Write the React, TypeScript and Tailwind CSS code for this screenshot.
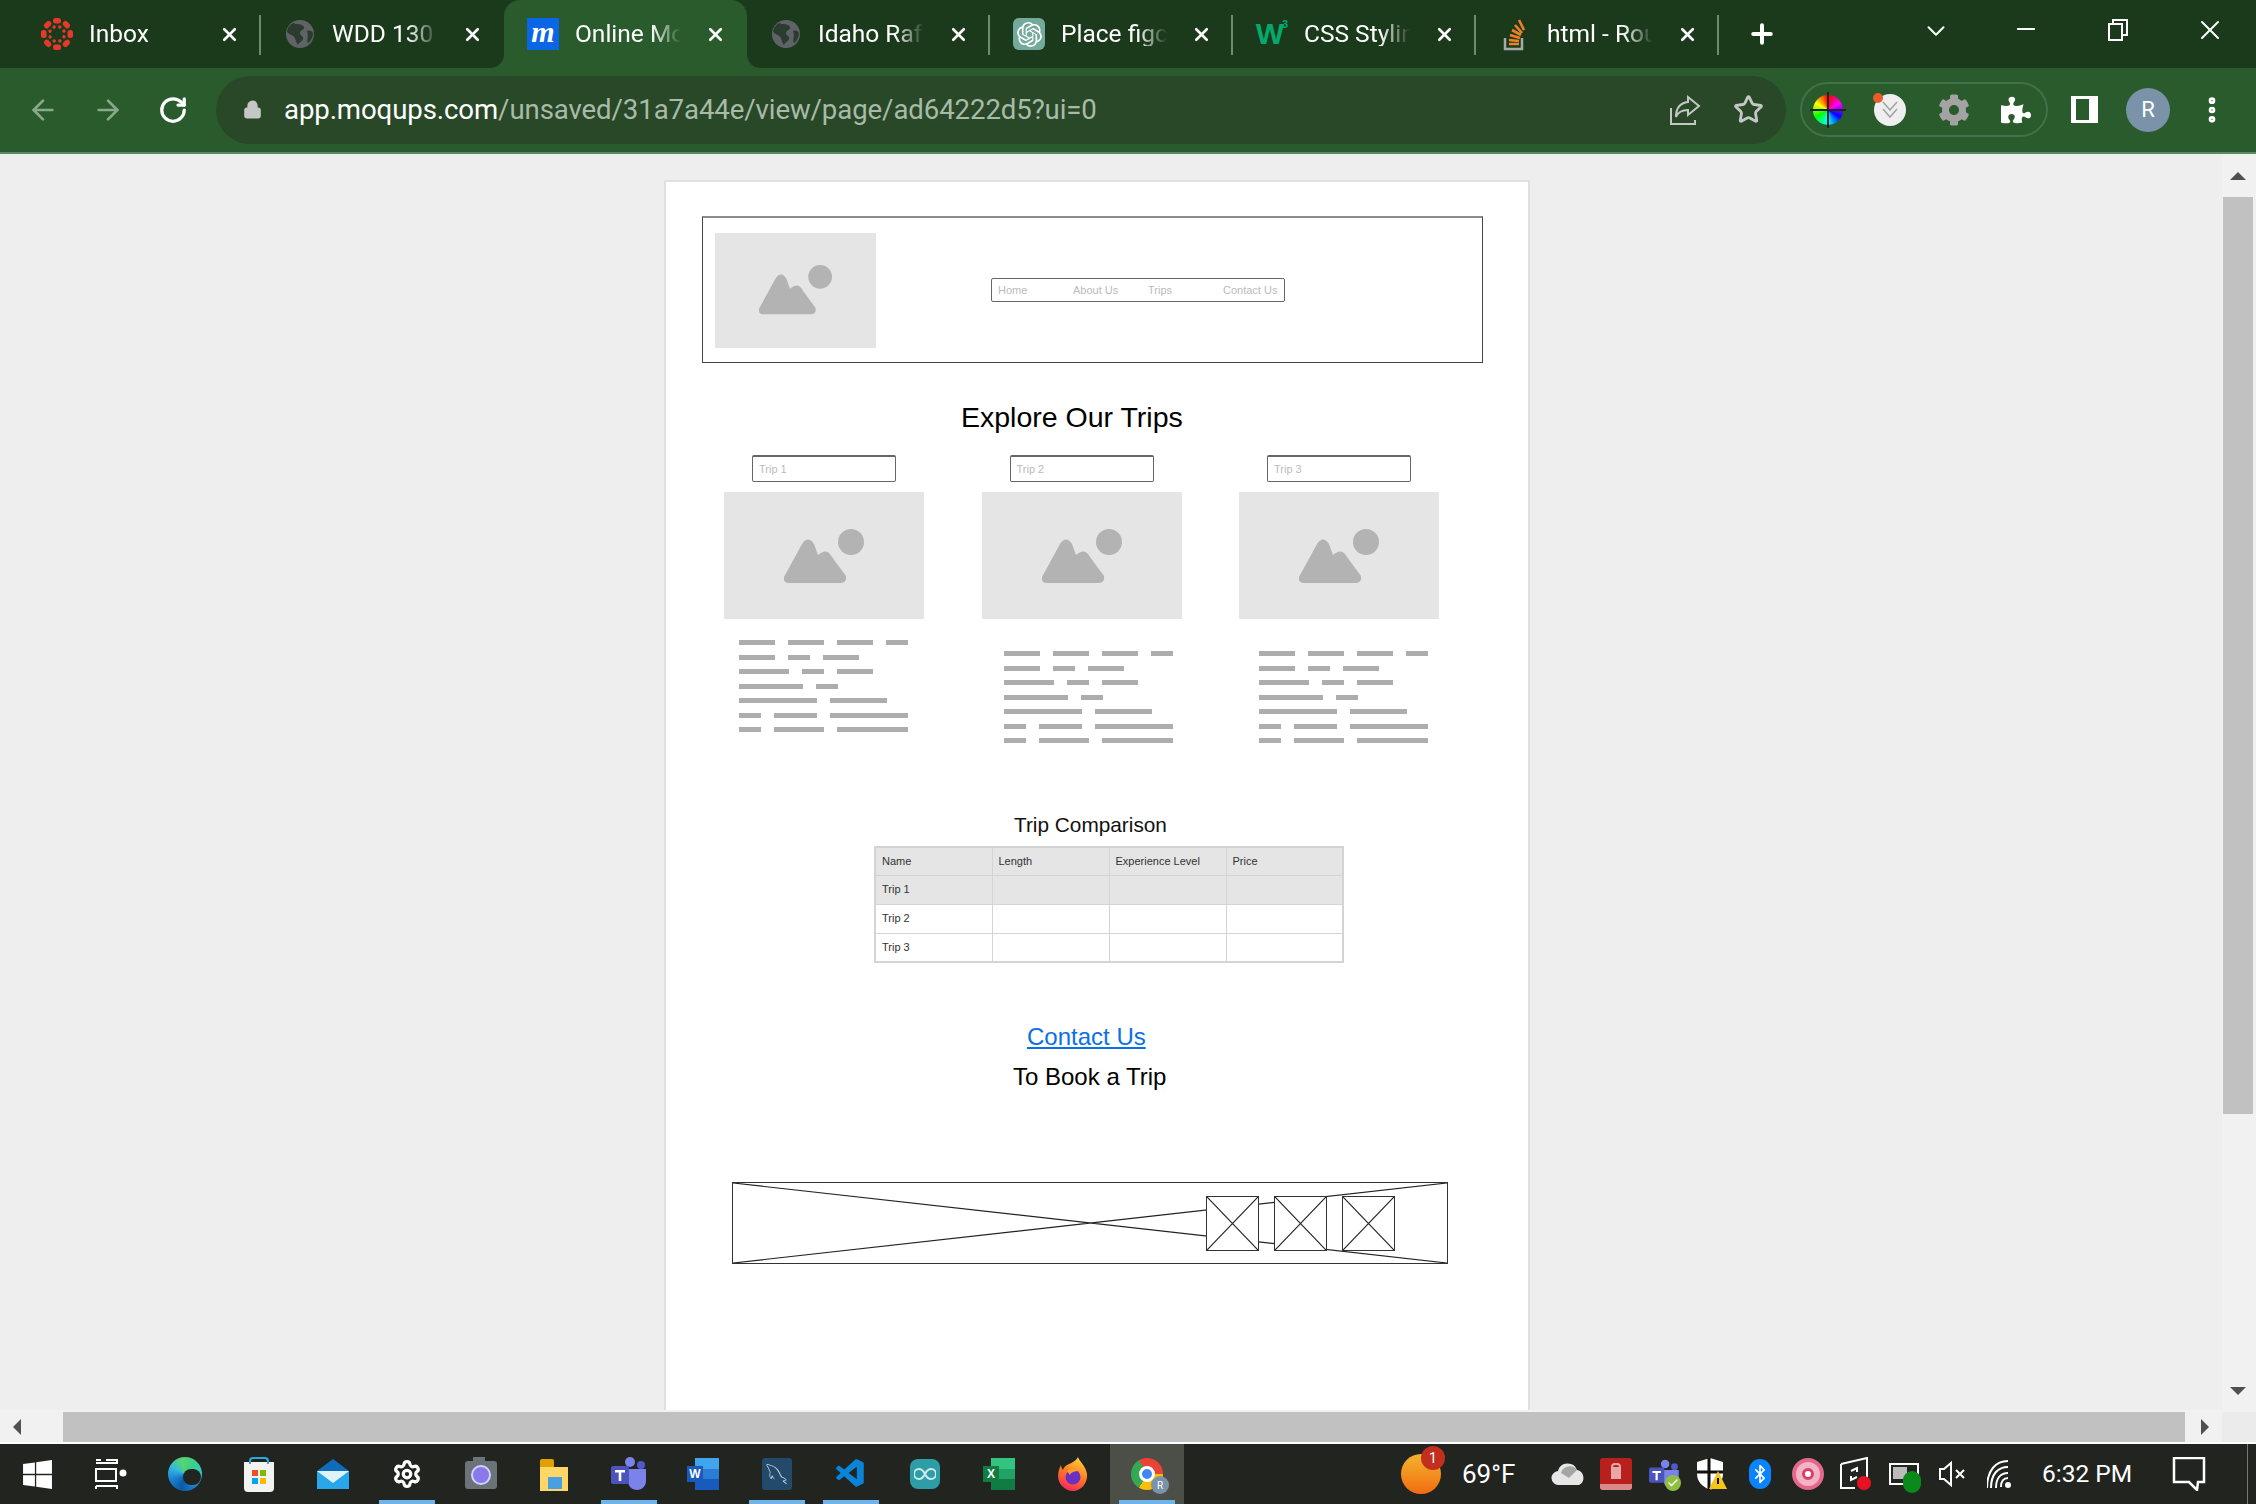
import { X, Plus, ChevronDown, Minus, ArrowLeft, ArrowRight, RotateCw, Lock, Star, MoreVertical, Settings, Bluetooth, Check } from "lucide-react"
import { SiOpenai } from "react-icons/si"
import { FaWindows, FaCog, FaPuzzlePiece } from "react-icons/fa"
import { DiMysql } from "react-icons/di"
import { VscVscode } from "react-icons/vsc"
import type { ReactNode } from "react"

const ui = "font-['Roboto',sans-serif]"
const wire = "font-['Liberation_Sans',Arial,sans-serif]"

function CanvasIcon() {
  const angles = [0, 45, 90, 135, 180, 225, 270, 315]
  return (
    <svg width="32" height="32" viewBox="-16 -16 32 32">
      {angles.map((a) => (
        <g key={a} transform={`rotate(${a})`}>
          <rect x="-4" y="-16" width="8" height="5.5" rx="2.5" fill="#e5392a" />
          <circle cx="0" cy="-7.5" r="1.7" fill="#e5392a" transform="rotate(22)" />
        </g>
      ))}
    </svg>
  )
}

function GlobeIcon() {
  return (
    <svg width="30" height="30" viewBox="0 0 30 30">
      <circle cx="15" cy="15" r="14" fill="#5f6368" />
      <path d="M8 4c4 2 9 0 11 4 1 3-4 3-4 6s4 3 3 6c-1 3-4 3-5 6-3-4-2-7-5-9s-5-2-6-5c1-4 3-6 6-8z" fill="#2b3b2e" />
      <path d="M22 12c3-1 5 0 6 2 0 4-2 8-5 10-2-3 1-6-1-12z" fill="#2b3b2e" />
    </svg>
  )
}

function MoqupsIcon() {
  return (
    <div className={`flex h-8 w-8 items-center justify-center bg-[#0a66e4] pb-[5px] font-['Liberation_Serif',serif] text-[30px] font-bold italic leading-none text-white`}>
      m
    </div>
  )
}

function OpenAiIcon() {
  return (
    <div className="flex h-8 w-8 items-center justify-center rounded-md bg-[#74aa9c] text-white">
      <SiOpenai size={25} />
    </div>
  )
}

function W3Icon() {
  return (
    <div className={`flex w-9 items-start ${wire} font-bold leading-none text-[#04aa6d]`}>
      <span className="text-[30px]">W</span>
      <span className="-ml-[2px] text-[11px]">3</span>
    </div>
  )
}

function StackIcon() {
  return (
    <svg width="24" height="34" viewBox="0 0 24 34" fill="none">
      <path d="M2 21v11h17V21" stroke="#a9a9a9" strokeWidth="2.5" />
      <path d="M6 27h10M6 23l10 1M7 18l10 3M9 13l9 5M12 8l7 8M16 3l5 10" stroke="#f08024" strokeWidth="2.6" />
    </svg>
  )
}

function Tab({ icon, title, active, sep }: { icon: ReactNode; title: string; active?: boolean; sep?: boolean }) {
  return (
    <div className={`relative flex h-[68px] w-[243px] shrink-0 items-center pl-[23px] ${active ? "rounded-t-[16px] bg-[#2a5b2c]" : ""}`}>
      {active && (
        <>
          <svg className="absolute bottom-0 -left-[14px]" width="14" height="14" viewBox="0 0 14 14"><path d="M14 0v14H0c8 0 14-6 14-14z" fill="#2a5b2c" /></svg>
          <svg className="absolute bottom-0 -right-[14px]" width="14" height="14" viewBox="0 0 14 14"><path d="M0 0v14h14C6 14 0 8 0 0z" fill="#2a5b2c" /></svg>
        </>
      )}
      <div className="flex w-8 shrink-0 justify-center">{icon}</div>
      <div className="ml-4 w-[106px] shrink-0 overflow-hidden whitespace-nowrap text-[24.5px] leading-none text-white [mask-image:linear-gradient(to_right,black_72%,transparent)]">
        {title}
      </div>
      <X className="ml-[24px] shrink-0 text-white" size={21} strokeWidth={3} />
      {sep && <div className="absolute right-0 top-[15px] h-[40px] w-[2px] bg-[#6d8a6e]" />}
    </div>
  )
}

function TabStrip() {
  return (
    <div className={`flex h-[68px] items-center bg-[#1b3a1c] pl-[18px] ${ui}`}>
      <Tab icon={<CanvasIcon />} title="Inbox" sep />
      <Tab icon={<GlobeIcon />} title="WDD 130" />
      <Tab icon={<MoqupsIcon />} title="Online Mockup" active />
      <Tab icon={<GlobeIcon />} title="Idaho Rafting" sep />
      <Tab icon={<OpenAiIcon />} title="Place figcaption" sep />
      <Tab icon={<W3Icon />} title="CSS Styling" sep />
      <Tab icon={<StackIcon />} title="html - Round" sep />
      <Plus className="ml-[28px] text-white" size={30} strokeWidth={3.2} />
      <ChevronDown className="ml-[144px] -mt-[6px] text-white" size={30} strokeWidth={1.6} />
      <Minus className="ml-[61px] -mt-[10px] text-white" size={28} strokeWidth={1.6} />
      <svg className="ml-[68px] -mt-[8px]" width="20" height="22" viewBox="0 0 20 22" fill="none" stroke="white" strokeWidth="2">
        <rect x="1" y="5" width="13" height="16" />
        <path d="M5 5V1h14v15h-5" />
      </svg>
      <X className="ml-[66px] -mt-[8px] text-white" size={32} strokeWidth={1.5} />
    </div>
  )
}

function ColorWheel() {
  return (
    <div className="relative h-[30px] w-[30px] rounded-full bg-[conic-gradient(#ff0000,#ff00ff,#0000ff,#00ffff,#00ff00,#ffff00,#ff0000)]">
      <div className="absolute left-[14px] -top-[3px] h-[36px] w-[2px] bg-[#222]" />
      <div className="absolute -left-[3px] top-[14px] h-[2px] w-[36px] bg-[#222]" />
    </div>
  )
}

function PocketIcon() {
  return (
    <div className="relative flex h-[32px] w-[32px] items-center justify-center rounded-full bg-[#efefef]">
      <svg width="18" height="20" viewBox="0 0 18 20" fill="none" stroke="#a5a5a5" strokeWidth="1.6">
        <path d="M2 2l7 8 7-8M2 9l7 8 7-8" />
      </svg>
      <div className="absolute -left-px -top-px h-[10px] w-[10px] rounded-full bg-[#ea5a2b]" />
    </div>
  )
}

function Toolbar() {
  return (
    <div className={`flex h-[86px] items-center border-b-2 border-[#5c8a5e] bg-[#2a5b2c] pb-[1px] pl-[10px] ${ui}`}>
      <div className="flex h-[65px] w-[65px] items-center justify-center text-[#8aa98b]"><ArrowLeft size={32} strokeWidth={2} /></div>
      <div className="flex h-[65px] w-[65px] items-center justify-center text-[#8aa98b]"><ArrowRight size={32} strokeWidth={2} /></div>
      <div className="flex h-[65px] w-[65px] items-center justify-center text-white"><RotateCw size={30} strokeWidth={2.6} /></div>
      <div className="ml-[11px] flex h-[68px] w-[1570px] items-center rounded-full bg-[#284828] pl-[27px]">
        <Lock size={19} strokeWidth={3} className="fill-[#c4c7c5] text-[#c4c7c5]" />
        <div className="ml-[22px] text-[27.6px] leading-none tracking-[-0.1px] text-[#a8bba9]">
          <span className="text-white">app.moqups.com</span>/unsaved/31a7a44e/view/page/ad64222d5?ui=0
        </div>
        <div className="ml-auto flex items-center pr-[22px]">
          <svg width="32" height="32" viewBox="0 0 32 32" fill="none" stroke="#c4c7c5" strokeWidth="2">
            <path d="M2 14v16h24v-4" />
            <path d="M19 3l11 9-11 9v-5c-6 0-10 2-12 7 0-9 4-14 12-15z" />
          </svg>
          <Star className="ml-[32px] text-[#c4c7c5]" size={31} strokeWidth={2.2} />
        </div>
      </div>
      <div className="ml-[14px] flex h-[55px] w-[248px] items-center rounded-full border-2 border-[#44704a] pl-[2px]">
        <div className="-ml-[4px] flex w-[60px] justify-center"><ColorWheel /></div>
        <div className="ml-[3px] flex w-[64px] justify-center"><PocketIcon /></div>
        <div className="ml-[4px] flex w-[64px] justify-center"><FaCog className="text-[#a3a3a3]" size={32} /></div>
        <div className="ml-[2px] flex w-[64px] justify-center"><FaPuzzlePiece className="text-white" size={30} /></div>
      </div>
      <div className="ml-[4px] flex w-[64px] justify-center">
        <div className="h-[27px] w-[27px] border-y-[3px] border-l-[5px] border-r-[9px] border-white" />
      </div>
      <div className="flex w-[64px] justify-center">
        <div className="flex h-[44px] w-[44px] items-center justify-center rounded-full bg-[#7a93a8] text-[22px] text-white">R</div>
      </div>
      <div className="flex w-[64px] justify-center"><MoreVertical className="text-white" size={32} strokeWidth={3} /></div>
    </div>
  )
}

function Mountain({ w }: { w: number }) {
  return (
    <svg width={w} viewBox="0 0 80 54" fill="#b3b3b3">
      <path d="M5 54Q-1 54 0 48L18 15Q24 6 30 15L34 26Q43 18 48 28L62 47Q63 54 57 54Z" />
      <circle cx="67" cy="13" r="13" />
    </svg>
  )
}

const bars = [
  [36, 36, 36, 22],
  [36, 22, 36],
  [50, 22, 36],
  [64, 22],
  [78, 57],
  [22, 43, 78],
  [22, 50, 71],
]

function TripCard({ label, textLeft, textTop }: { label: string; textLeft: string; textTop: string }) {
  return (
    <div className="w-[200px]">
      <div className="mx-auto flex h-[27px] w-[144px] items-center rounded-[2px] border border-[#666] border-t-2 pl-[6px] text-[11px] text-[#bbb]">{label}</div>
      <div className="mt-[10px] flex h-[127px] items-center justify-center bg-[#e5e5e5]">
        <Mountain w={80} />
      </div>
      <div className={`flex flex-col gap-[9.5px] ${textLeft} ${textTop}`}>
        {bars.map((row, i) => (
          <div key={i} className="flex h-[5px] gap-[13px]">
            {row.map((b, j) => (
              <div key={j} className="h-[5px] bg-[#adadad]" style={{ width: b }} />
            ))}
          </div>
        ))}
      </div>
    </div>
  )
}

function CrossBox({ className, children }: { className: string; children?: ReactNode }) {
  return (
    <div className={`relative border border-[#333] ${className}`}>
      <svg className="absolute inset-0 h-full w-full" preserveAspectRatio="none" viewBox="0 0 100 100">
        <path d="M0 0L100 100M100 0L0 100" stroke="#222" strokeWidth="1.2" vectorEffect="non-scaling-stroke" fill="none" />
      </svg>
      {children}
    </div>
  )
}

function WirePage() {
  const rows = ["Trip 1", "Trip 2", "Trip 3"]
  return (
    <div className={`ml-[664px] mt-[26px] flex w-[866px] shrink-0 flex-col border-x-2 border-t-2 border-[#e0e0e0] bg-white pl-[1px] pt-[34px] ${wire}`}>
      <div className="ml-[35px] flex h-[147px] w-[781px] items-center border border-[#444] border-t-2 border-t-[#8c8c8c]">
        <div className="ml-[12px] flex h-[115px] w-[161px] items-center justify-center bg-[#e5e5e5]">
          <Mountain w={73} />
        </div>
        <div className="ml-[115px] grid h-[24px] w-[294px] grid-cols-[75px_75px_75px_1fr] items-center rounded-[2px] border border-[#666] pl-[6px] text-[11px] text-[#bbb]">
          <span>Home</span>
          <span>About Us</span>
          <span>Trips</span>
          <span>Contact Us</span>
        </div>
      </div>

      <h1 className="mt-[37px] pl-[294px] text-[28.5px] leading-[34px] text-black">Explore Our Trips</h1>

      <div className="ml-[57px] mt-[21px] flex gap-[57.5px]">
        <TripCard label="Trip 1" textLeft="pl-[15px]" textTop="mt-[21px]" />
        <TripCard label="Trip 2" textLeft="pl-[22px]" textTop="mt-[32px]" />
        <TripCard label="Trip 3" textLeft="pl-[20px]" textTop="mt-[32px]" />
      </div>

      <div className="mt-[70px] pl-[347px] text-[20.8px] leading-[24px] text-[#111]">Trip Comparison</div>

      <table className="ml-[207px] mt-[9px] w-[470px] table-fixed border-collapse border-2 border-[#d4d4d4] text-[11px] text-[#333]">
        <tbody>
          <tr className="h-[28px] bg-[#e5e5e5]">
            {["Name", "Length", "Experience Level", "Price"].map((h) => (
              <td key={h} className="border border-[#d4d4d4] pl-[6px]">{h}</td>
            ))}
          </tr>
          {rows.map((r, i) => (
            <tr key={r} className={`h-[29px] ${i === 0 ? "bg-[#e5e5e5]" : "bg-white"}`}>
              <td className="border border-[#d4d4d4] pl-[6px]">{r}</td>
              <td className="border border-[#d4d4d4]" />
              <td className="border border-[#d4d4d4]" />
              <td className="border border-[#d4d4d4]" />
            </tr>
          ))}
        </tbody>
      </table>

      <a className="ml-[360px] mt-[60px] w-fit text-[24px] leading-[28px] text-[#0a6fe8] underline">Contact Us</a>
      <div className="ml-[346px] mt-[12px] text-[24px] leading-[28px] text-black">To Book a Trip</div>

      <CrossBox className="ml-[65px] mt-[91px] flex h-[82px] w-[716px] shrink-0 items-center justify-end gap-[15px] pr-[52px]">
        <CrossBox className="z-10 h-[55px] w-[53px] bg-white" />
        <CrossBox className="z-10 h-[55px] w-[53px] bg-white" />
        <CrossBox className="z-10 h-[55px] w-[53px] bg-white" />
      </CrossBox>
    </div>
  )
}

function VScroll() {
  return (
    <div className="ml-auto flex w-[34px] shrink-0 flex-col items-center bg-[#f1f1f1] pr-[2px]">
      <div className="flex h-[43px] items-center justify-center">
        <div className="mt-[1px] border-x-[8px] border-b-[8px] border-x-transparent border-b-[#505050]" />
      </div>
      <div className="h-[917px] w-[30px] bg-[#c1c1c1]" />
      <div className="mt-auto flex h-[36px] items-center justify-center pb-[2px]">
        <div className="border-x-[8px] border-t-[8px] border-x-transparent border-t-[#505050]" />
      </div>
    </div>
  )
}

function HScroll() {
  return (
    <div className="flex h-[34px] border-b-2 border-white bg-[#f1f1f1] pt-[2px]">
      <div className="flex w-[63px] items-center pl-[13px]">
        <div className="border-y-[8px] border-r-[8px] border-y-transparent border-r-[#505050]" />
      </div>
      <div className="w-[2122px] bg-[#c1c1c1]" />
      <div className="flex w-[37px] items-center pl-[16px]">
        <div className="border-y-[8px] border-l-[8px] border-y-transparent border-l-[#505050]" />
      </div>
      <div className="flex-1 bg-[#ebebeb]" />
    </div>
  )
}

function Edge() {
  return (
    <div className="h-[34px] w-[34px] rounded-full bg-[conic-gradient(from_40deg,#39d08c,#37c6d0,#1a7fd0,#0c59a4,#1a7fd0,#35b8e0,#58d66a,#39d08c)] p-[9px]">
      <div className="ml-[6px] mt-[3px] h-[16px] w-[18px] rounded-full bg-[#22251f]" />
    </div>
  )
}

function Store() {
  return (
    <div className="relative mt-[6px] h-[30px] w-[30px] rounded-b-[4px] bg-[#f2f2f2]">
      <div className="absolute -top-[5px] left-[5px] h-[7px] w-[20px] rounded-t-[4px] border-2 border-b-0 border-[#29a8e0]" />
      <div className="absolute left-[8px] top-[8px] grid grid-cols-2 gap-[2px]">
        <div className="h-[6px] w-[6px] bg-[#f25022]" />
        <div className="h-[6px] w-[6px] bg-[#7fba00]" />
        <div className="h-[6px] w-[6px] bg-[#00a4ef]" />
        <div className="h-[6px] w-[6px] bg-[#ffb900]" />
      </div>
    </div>
  )
}

function Mail() {
  return (
    <svg width="32" height="30" viewBox="0 0 32 30">
      <path d="M0 12L16 0l16 12v18H0z" fill="#0f6cbd" />
      <path d="M0 12h32v18H0z" fill="#28a8ea" />
      <path d="M0 12h32L16 24z" fill="#dff3fb" />
    </svg>
  )
}

function Camera() {
  return (
    <div className="relative mt-[2px] flex h-[28px] w-[32px] items-center justify-center rounded-[3px] bg-[#6c7378]">
      <div className="absolute -top-[4px] left-[8px] h-[5px] w-[12px] bg-[#6c7378]" />
      <div className="h-[20px] w-[20px] rounded-full border-2 border-[#cfd4ff] bg-[#8a79e8]" />
    </div>
  )
}

function Folder() {
  return (
    <div className="relative h-[30px] w-[30px]">
      <div className="h-[8px] w-[14px] rounded-t-[2px] bg-[#e0a100]" />
      <div className="h-[24px] w-[28px] bg-[#ffd766]" />
      <div className="absolute bottom-0 left-[8px] h-[12px] w-[14px] bg-[#4a9fe0]" />
    </div>
  )
}

function Teams({ small }: { small?: boolean }) {
  const s = small ? 0.85 : 1
  return (
    <svg width={36 * s} height={36 * s} viewBox="0 0 36 36">
      <circle cx="19" cy="6" r="5" fill="#7b83eb" />
      <circle cx="30" cy="9" r="4" fill="#5059c9" />
      <path d="M13 13h22v12c0 5-4 9-9 9s-9-4-9-9z" fill="#7b83eb" />
      <rect x="0" y="10" width="18" height="18" rx="2" fill="#4b53bc" />
      <path d="M4 14h10v2.500h-3.700V25H7.700v-8.500H4z" fill="#fff" />
    </svg>
  )
}

function OfficeIcon({ letter, dark, mid, light }: { letter: string; dark: string; mid: string; light: string }) {
  return (
    <div className="relative h-[32px] w-[32px]">
      <div className="ml-[8px] flex h-[32px] w-[24px] flex-col">
        <div className="flex-1" style={{ background: light }} />
        <div className="flex-1" style={{ background: mid }} />
        <div className="flex-1" style={{ background: dark }} />
      </div>
      <div className={`absolute left-0 top-[8px] flex h-[16px] w-[16px] items-center justify-center text-[12px] font-bold text-white ${wire}`} style={{ background: dark }}>
        {letter}
      </div>
    </div>
  )
}

function Firefox() {
  return (
    <svg width="30" height="34" viewBox="0 0 30 34">
      <defs>
        <linearGradient id="ffx" x1="0.7" y1="0" x2="0.3" y2="1">
          <stop offset="0" stopColor="#ffd23a" />
          <stop offset="0.5" stopColor="#ff7a1f" />
          <stop offset="1" stopColor="#f3265e" />
        </linearGradient>
      </defs>
      <path d="M20 0c1 4 8 9 9 17 1 9-6 17-14 17S0 27 0 19c0-5 2-9 3-11 0 2 1 4 2 5 1-5 7-6 10-8 2-1 4-3 5-5z" fill="url(#ffx)" />
      <circle cx="15" cy="20" r="7.500" fill="#6b2fc4" />
      <path d="M9 14c3-3 9-3 12 0-4 0-8 1-9 4z" fill="#ff9a2e" />
    </svg>
  )
}

function Chrome() {
  return (
    <div className="relative">
      <div className="flex h-[32px] w-[32px] items-center justify-center rounded-full bg-[conic-gradient(from_-30deg,#ea4335_0_120deg,#fbbc04_120deg_240deg,#34a853_240deg_360deg)]">
        <div className="h-[16px] w-[16px] rounded-full border-[3px] border-white bg-[#4285f4]" />
      </div>
      <div className={`absolute -bottom-[4px] -right-[6px] flex h-[18px] w-[18px] items-center justify-center rounded-full bg-[#7a93a8] text-[10px] text-white ${ui}`}>R</div>
    </div>
  )
}

const startCell = "flex h-[60px] w-[74px] shrink-0 items-center justify-center"
const bar = "absolute bottom-0 left-[9px] h-[4px] w-[56px] bg-[#6fb3e8]"

function Taskbar() {
  const tray = "flex h-[60px] w-[48px] shrink-0 items-center justify-center"
  return (
    <div className={`relative flex h-[60px] items-center bg-[#22251f] ${ui}`}>
      <div className={startCell}><FaWindows className="text-white" size={33} /></div>
      <div className={startCell}>
        <svg width="32" height="30" viewBox="0 0 32 30" fill="none" stroke="white" strokeWidth="2">
          <path d="M1 1h5M11 1h11v3H1M1 10h20v12H1zM1 27h22M22 27v3M1 27v3" />
          <circle cx="28" cy="14" r="2.500" fill="white" />
        </svg>
      </div>
      <div className={startCell}><Edge /></div>
      <div className={startCell}><Store /></div>
      <div className={startCell}><Mail /></div>
      <div className={`relative ${startCell}`}><Settings className="text-white" size={30} strokeWidth={2.6} /><div className={bar} /></div>
      <div className={startCell}><Camera /></div>
      <div className={startCell}><Folder /></div>
      <div className={`relative ${startCell}`}><Teams /><div className={bar} /></div>
      <div className={startCell}><OfficeIcon letter="W" dark="#185abd" mid="#2b7cd3" light="#41a5ee" /></div>
      <div className={`relative ${startCell}`}>
        <div className="flex h-[32px] w-[30px] items-center justify-center overflow-hidden rounded-[3px] bg-[#23496b]"><DiMysql className="text-[#d5e0ea]" size={34} /></div>
        <div className={bar} />
      </div>
      <div className={`relative ${startCell}`}><VscVscode className="text-[#0a84d8]" size={34} /><div className={bar} /></div>
      <div className={startCell}>
        <div className="flex h-[30px] w-[30px] items-center justify-center rounded-[8px] bg-[#2d9ea6]">
          <svg width="22" height="12" viewBox="0 0 22 12" fill="none" stroke="#cfe8ea" strokeWidth="2"><path d="M11 6C9 2 7 1 5 1a5 5 0 000 10c2 0 4-1 6-5zm0 0c2-4 4-5 6-5a5 5 0 010 10c-2 0-4-1-6-5z" /></svg>
        </div>
      </div>
      <div className={startCell}><OfficeIcon letter="X" dark="#107c41" mid="#21a366" light="#33c481" /></div>
      <div className={startCell}><Firefox /></div>
      <div className={`relative ${startCell} bg-[#4c4e48]`}><Chrome /><div className={bar} /></div>

      <div className="ml-[217px] flex h-[60px] items-center">
        <div className="relative h-[40px] w-[40px]">
          <div className="h-[40px] w-[40px] rounded-full bg-gradient-to-b from-[#f2b42c] to-[#f06a10]" />
          <div className="absolute -right-[4px] -top-[8px] flex h-[24px] w-[24px] items-center justify-center rounded-full bg-[#c22f1e] text-[14px] text-white">1</div>
        </div>
        <div className="ml-[21px] w-[82px] text-[26px] leading-none text-white">69°F</div>
      </div>
      <div className={tray}>
        <svg width="34" height="22" viewBox="0 0 34 22"><path d="M8 22a7 7 0 01-1-14 10 10 0 0119-1 8 8 0 012 15z" fill="#e6e6e6" /><path d="M10 10a9 9 0 0116-3l-8 8z" fill="#a5a5a5" /></svg>
      </div>
      <div className={tray}>
        <div className="flex h-[32px] w-[32px] flex-col items-center rounded-[3px] bg-[#b7201c] pt-[5px]">
          <div className="h-[6px] w-[10px] rounded-t-[4px] border-2 border-[#e8a6a4]" />
          <div className="h-[10px] w-[10px] bg-[#e8a6a4]" />
          <div className="mt-auto h-[6px] w-full rounded-b-[3px] bg-[#d98a88]" />
        </div>
      </div>
      <div className={tray}>
        <div className="relative">
          <Teams small />
          <div className="absolute -bottom-[2px] -right-[2px] flex h-[16px] w-[16px] items-center justify-center rounded-full bg-[#8fbf3f]"><Check className="text-white" size={12} strokeWidth={3} /></div>
        </div>
      </div>
      <div className={tray}>
        <svg width="32" height="34" viewBox="0 0 32 34">
          <path d="M14 1l13 4v12c0 8-6 13-13 16C7 30 1 25 1 17V5z" fill="#fff" />
          <path d="M13 1v32M1 15h26" stroke="#111" strokeWidth="3" />
          <path d="M22 14l9 18H13z" fill="#f5c518" />
          <path d="M22 21v6" stroke="#111" strokeWidth="2" />
        </svg>
      </div>
      <div className={tray}><div className="flex h-[30px] w-[22px] items-center justify-center rounded-full bg-[#0a84ff]"><Bluetooth className="text-white" size={20} /></div></div>
      <div className={tray}>
        <div className="flex h-[32px] w-[32px] items-center justify-center rounded-full border-[4px] border-[#e5688c] bg-[#f4b4c6]">
          <div className="h-[12px] w-[12px] rounded-full border-[3px] border-[#d83f70] bg-white" />
        </div>
      </div>
      <div className={tray}>
        <svg width="34" height="34" viewBox="0 0 34 34" fill="none" stroke="white" strokeWidth="2">
          <path d="M2 7l26-6v24M2 7v24h14" />
          <path d="M12 14l6-3v4M18 20l-6 3v-4" />
          <circle cx="25" cy="26" r="7" fill="#e81123" stroke="none" />
        </svg>
      </div>
      <div className={tray}>
        <div className="relative h-[22px] w-[30px] border-2 border-white">
          <div className="absolute left-[2px] top-[2px] h-[12px] w-[14px] bg-[#bbb]" />
          <div className="absolute -bottom-[10px] -right-[4px] h-[22px] w-[18px] rounded-full border-2 border-[#0b8a1c] bg-[#0b8a1c]" />
        </div>
      </div>
      <div className={tray}>
        <svg width="28" height="28" viewBox="0 0 28 28" fill="none" stroke="white" strokeWidth="2">
          <path d="M2 9h4l7-6v22l-7-6H2z" />
          <path d="M18 10l8 8M26 10l-8 8" />
        </svg>
      </div>
      <div className={tray}>
        <svg width="26" height="30" viewBox="0 0 26 30" fill="none" stroke="white" strokeWidth="2">
          <circle cx="21" cy="26" r="3" fill="white" stroke="none" />
          <path d="M14 28c0-6 3-9 7-9M9 29c0-10 5-15 12-15M4 29C4 15 11 8 21 8M0 29C0 11 9 2 21 2" />
        </svg>
      </div>
      <div className="ml-[18px] w-[85px] whitespace-nowrap text-[24.5px] leading-none text-white">6:32 PM</div>
      <svg className="ml-[45px]" width="34" height="34" viewBox="0 0 34 34" fill="none" stroke="white" strokeWidth="2.5">
        <path d="M2 1h30v24h-6l-1 8-8-8H2z" />
      </svg>
      <div className="absolute right-[8px] top-0 h-[60px] w-[1px] bg-[#777]" />
    </div>
  )
}

export default function App() {
  return (
    <div className="flex h-[1504px] w-[2256px] flex-col overflow-hidden bg-[#eeeeee]">
      <TabStrip />
      <Toolbar />
      <div className="flex h-[1256px] overflow-hidden">
        <WirePage />
        <VScroll />
      </div>
      <HScroll />
      <Taskbar />
    </div>
  )
}
